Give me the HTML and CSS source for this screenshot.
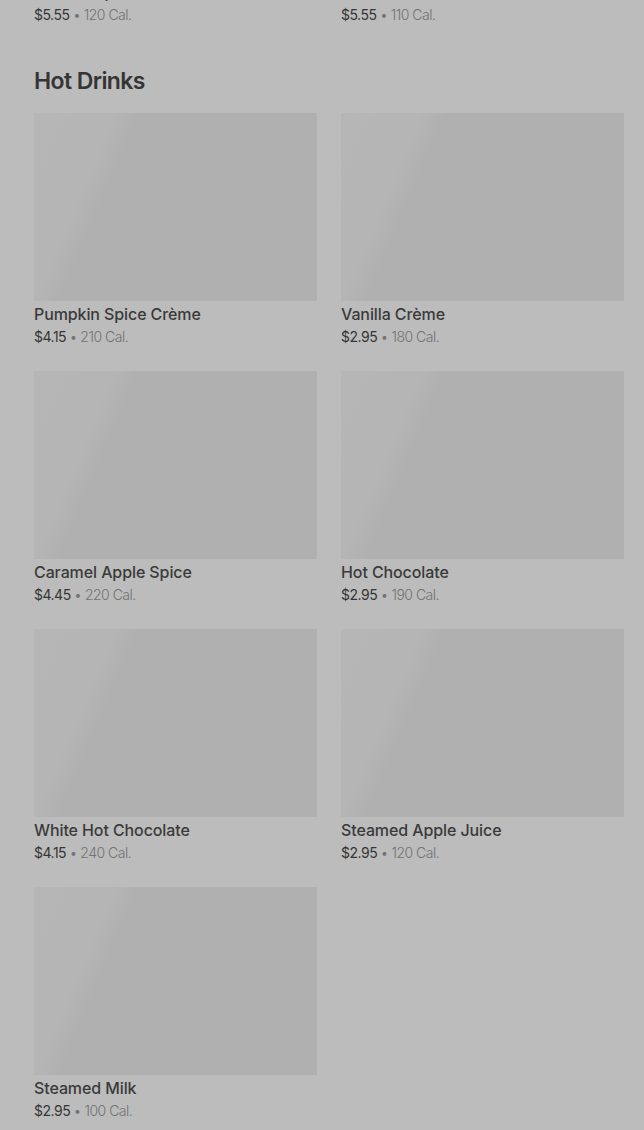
FILE: index.html
```html
<!DOCTYPE html>
<html lang="en">
<head>
<meta charset="utf-8">
<title>Menu</title>
<link rel="stylesheet" href="styles.css">
</head>
<body>
<main class="menu">
  <section class="section section-partial">
    <div class="grid">
      <div class="item">
        <div class="name">Iced Pumpkin Cream Chai</div>
        <div class="meta"><span class="price">$5.55</span> • 120 Cal.</div>
      </div>
      <div class="item">
        <div class="name">Iced Caramel Macchiato</div>
        <div class="meta"><span class="price">$5.55</span> • 110 Cal.</div>
      </div>
    </div>
  </section>
  <section class="section">
    <h2 class="section-title">Hot Drinks</h2>
    <div class="grid">
      <div class="item">
        <div class="thumb"></div>
        <div class="name">Pumpkin Spice Crème</div>
        <div class="meta"><span class="price">$4.15</span> • 210 Cal.</div>
      </div>
      <div class="item">
        <div class="thumb"></div>
        <div class="name">Vanilla Crème</div>
        <div class="meta"><span class="price">$2.95</span> • 180 Cal.</div>
      </div>
      <div class="item">
        <div class="thumb"></div>
        <div class="name">Caramel Apple Spice</div>
        <div class="meta"><span class="price">$4.45</span> • 220 Cal.</div>
      </div>
      <div class="item">
        <div class="thumb"></div>
        <div class="name">Hot Chocolate</div>
        <div class="meta"><span class="price">$2.95</span> • 190 Cal.</div>
      </div>
      <div class="item">
        <div class="thumb"></div>
        <div class="name">White Hot Chocolate</div>
        <div class="meta"><span class="price">$4.15</span> • 240 Cal.</div>
      </div>
      <div class="item">
        <div class="thumb"></div>
        <div class="name">Steamed Apple Juice</div>
        <div class="meta"><span class="price">$2.95</span> • 120 Cal.</div>
      </div>
      <div class="item">
        <div class="thumb"></div>
        <div class="name">Steamed Milk</div>
        <div class="meta"><span class="price">$2.95</span> • 100 Cal.</div>
      </div>
    </div>
  </section>
</main>
</body>
</html>
```

FILE: styles.css
```css
html, body {
  margin: 0;
  padding: 0;
  background: #bcbcbc;
  height: 100%;
  overflow: hidden;
}

body {
  font-family: Inter, "Noto Sans", "Liberation Sans", sans-serif;
  color: #353535;
}

.menu {
  padding: 0 20px 0 34px;
}

.section-partial {
  margin-top: -21px;
}

.section-title {
  margin: 40px 0 16px;
  font-size: 23px;
  line-height: 32px;
  font-weight: 600;
  letter-spacing: -0.6px;
  color: #353535;
}

.grid {
  display: grid;
  grid-template-columns: 1fr 1fr;
  column-gap: 24px;
  row-gap: 24px;
}

.item {
  display: flex;
  flex-direction: column;
  min-width: 0;
}

.thumb {
  height: 188px;
  background: linear-gradient(113deg, #b6b6b6 0%, #b5b5b5 22%, #b0b0b0 29%, #b0b0b0 100%);
}

.name {
  margin-top: 3px;
  font-size: 16px;
  line-height: 20px;
  font-weight: 500;
  color: #3a3a3a;
  letter-spacing: -0.1px;
  white-space: nowrap;
}

.meta {
  margin-top: 3px;
  font-size: 14px;
  line-height: 20px;
  font-weight: 300;
  color: #727272;
  letter-spacing: -0.5px;
}

.price {
  font-weight: 400;
  color: #353535;
}
```
